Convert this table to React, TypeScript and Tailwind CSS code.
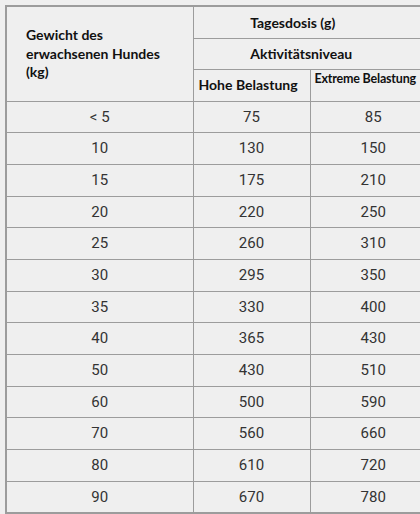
const rows: [string, string, string][] = [
  ["< 5", "75", "85"],
  ["10", "130", "150"],
  ["15", "175", "210"],
  ["20", "220", "250"],
  ["25", "260", "310"],
  ["30", "295", "350"],
  ["35", "330", "400"],
  ["40", "365", "430"],
  ["50", "430", "510"],
  ["60", "500", "590"],
  ["70", "560", "660"],
  ["80", "610", "720"],
  ["90", "670", "780"],
];

export default function App() {
  return (
    <div className="w-[420px] h-[514px] overflow-hidden bg-[#efefef] pt-[5px] pl-[5px]">
      <table className="table-fixed border-collapse w-[431px] border-2 border-[#9c9c9c] text-[#111]">
        <colgroup>
          <col className="w-[187px]" />
          <col className="w-[117px]" />
          <col className="w-[127px]" />
        </colgroup>
        <thead className="font-['Lato','Liberation_Sans',sans-serif] font-bold text-[14px]">
          <tr className="h-[32px]">
            <td rowSpan={3} className="border border-[#9c9c9c] pl-[19px] pr-2 align-middle leading-[18.5px]">
              Gewicht des
              <br />
              erwachsenen Hundes
              <br />
              (kg)
            </td>
            <td colSpan={2} className="border border-[#9c9c9c] text-center pr-[44px]">
              Tagesdosis (g)
            </td>
          </tr>
          <tr className="h-[31px]">
            <td colSpan={2} className="border border-[#9c9c9c] text-center pr-[27px]">
              Aktivitätsniveau
            </td>
          </tr>
          <tr className="h-[32px]">
            <td className="border border-[#9c9c9c] pl-[5px] pb-[1px] align-middle whitespace-nowrap">Hohe Belastung</td>
            <td className="border border-[#9c9c9c] pl-[4px] align-top text-[12.5px] tracking-[-0.2px] whitespace-nowrap">
              Extreme Belastung
            </td>
          </tr>
        </thead>
        <tbody className="font-['Roboto','Liberation_Sans',sans-serif] text-[15px] text-[#333]">
          {rows.map((r) => (
            <tr key={r[0]} className="h-[31.7px]">
              {r.map((c, i) => (
                <td key={i} className="border border-[#9c9c9c] text-center align-middle">
                  {c}
                </td>
              ))}
            </tr>
          ))}
        </tbody>
      </table>
    </div>
  );
}
